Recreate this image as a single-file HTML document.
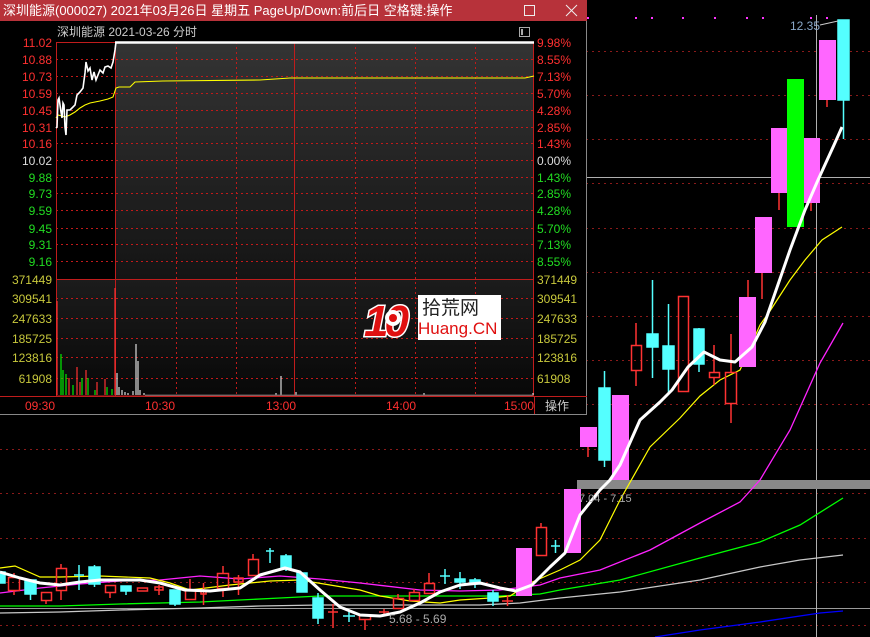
<!DOCTYPE html>
<html><head><meta charset="utf-8"><style>
html,body{margin:0;padding:0;background:#000;width:870px;height:637px;overflow:hidden}
svg{display:block}
text{font-family:"Liberation Sans","Noto Sans CJK SC",sans-serif}
</style></head><body>
<svg width="870" height="637" viewBox="0 0 870 637" xmlns="http://www.w3.org/2000/svg">
<defs>
<linearGradient id="pg" x1="0" y1="0" x2="0" y2="1"><stop offset="0" stop-color="#343434"/><stop offset="1" stop-color="#141414"/></linearGradient>
<linearGradient id="vg" x1="0" y1="0" x2="0" y2="1"><stop offset="0" stop-color="#1c1c1c"/><stop offset="1" stop-color="#080808"/></linearGradient>
</defs>
<rect width="870" height="637" fill="#000"/>
<g stroke="#8a1a1a" stroke-width="1" stroke-dasharray="2,4">
<line x1="586" y1="51.5" x2="870" y2="51.5"/><line x1="586" y1="95.5" x2="870" y2="95.5"/><line x1="586" y1="139.5" x2="870" y2="139.5"/><line x1="586" y1="183.5" x2="870" y2="183.5"/><line x1="586" y1="228.5" x2="870" y2="228.5"/><line x1="586" y1="272.5" x2="870" y2="272.5"/><line x1="586" y1="316.5" x2="870" y2="316.5"/><line x1="586" y1="360.5" x2="870" y2="360.5"/><line x1="586" y1="404.5" x2="870" y2="404.5"/>
<line x1="0" y1="449.5" x2="870" y2="449.5"/><line x1="0" y1="493.5" x2="870" y2="493.5"/><line x1="0" y1="538.5" x2="870" y2="538.5"/><line x1="0" y1="582.5" x2="870" y2="582.5"/><line x1="0" y1="625.5" x2="870" y2="625.5"/>
</g>
<line x1="0" y1="608.5" x2="870" y2="608.5" stroke="#9a9a9a"/>
<line x1="586" y1="177.5" x2="870" y2="177.5" stroke="#b0b0b0"/>
<line x1="816.5" y1="15" x2="816.5" y2="637" stroke="#b0b0b0"/>
<rect x="577" y="480" width="293" height="9" fill="#888"/>
<g fill="#ff33ff"><rect x="587" y="17" width="2" height="2"/><rect x="635" y="17" width="2" height="2"/><rect x="651" y="17" width="2" height="2"/><rect x="682" y="17" width="2" height="2"/><rect x="714" y="17" width="2" height="2"/><rect x="746" y="17" width="2" height="2"/><rect x="762" y="17" width="2" height="2"/><rect x="810" y="17" width="2" height="2"/><rect x="826" y="17" width="2" height="2"/></g>
<polyline fill="none" stroke="#0000ff" stroke-width="1.3" points="655,637 700,630 760,622 820,613 843,611"/>
<polyline fill="none" stroke="#c8c8c8" stroke-width="1.3" points="0,613 60,612 120,610 200,608 260,606 320,605 400,605 480,605 520,603 560,598 620,592 700,580 760,567 800,560 843,555"/>
<polyline fill="none" stroke="#00ff00" stroke-width="1.3" points="0,606 60,606 120,604 200,602 280,598 320,596 400,596 500,596 540,594 560,590 620,580 700,558 760,542 800,525 843,498"/>
<polyline fill="none" stroke="#ff22ff" stroke-width="1.3" points="0,593 40,588 80,584 120,581 160,580 200,576 240,579 280,576 320,579 360,583 420,590 460,591 500,590 540,585 560,578 600,570 650,550 700,523 740,502 760,480 790,430 820,363 843,323"/>
<polyline fill="none" stroke="#ffff00" stroke-width="1.2" points="0,568 15,566 40,577 60,577 100,576 150,578 170,583 190,590 230,585 270,581 300,580 330,585 360,590 380,596 410,601 440,603 460,600 490,598 510,596 530,583 560,570 580,560 600,540 620,500 650,447 680,418 700,396 720,380 740,370 760,325 770,311 790,280 805,260 822,240 842,227"/>
<g stroke="#ff3232" stroke-width="1.5" fill="none">
<rect x="8.5" y="577.5" width="11" height="13"/><line x1="14" y1="573" x2="14" y2="577"/><line x1="14" y1="591" x2="14" y2="595"/>
<rect x="41.5" y="592.5" width="10" height="8"/><line x1="46" y1="600" x2="46" y2="604"/>
<rect x="56.5" y="568.5" width="10" height="22"/><line x1="61" y1="564" x2="61" y2="568"/><line x1="61" y1="591" x2="61" y2="600"/>
<rect x="105.5" y="585.5" width="10" height="7"/><line x1="110" y1="592" x2="110" y2="598"/>
<rect x="137.5" y="588" width="10" height="3"/>
<rect x="155" y="587" width="8" height="3"/><line x1="159" y1="585" x2="159" y2="595"/>
<rect x="185.5" y="590.5" width="10" height="9"/><line x1="190" y1="579" x2="190" y2="590"/>
<rect x="201" y="591" width="5" height="3"/><line x1="203.5" y1="583" x2="203.5" y2="605"/>
<rect x="217.5" y="573.5" width="11" height="15"/><line x1="223" y1="566" x2="223" y2="573"/><line x1="223" y1="589" x2="223" y2="597"/>
<rect x="234" y="578" width="9" height="4"/><line x1="238.5" y1="575" x2="238.5" y2="595"/>
<rect x="248.5" y="559.5" width="10" height="16"/><line x1="253" y1="554" x2="253" y2="559"/>
<line x1="328" y1="612" x2="338" y2="612"/><line x1="333" y1="604" x2="333" y2="628"/>
<rect x="359.5" y="615.5" width="11" height="4"/><line x1="365" y1="619" x2="365" y2="630"/>
<line x1="379" y1="612" x2="389" y2="612"/><line x1="384" y1="609" x2="384" y2="614"/>
<rect x="393.5" y="598.5" width="10" height="10"/><line x1="398" y1="594" x2="398" y2="598"/>
<rect x="409.5" y="592.5" width="10" height="8"/><line x1="414" y1="589" x2="414" y2="592"/>
<rect x="424.5" y="583.5" width="10" height="10"/><line x1="429" y1="573" x2="429" y2="583"/>
<line x1="502" y1="601" x2="513" y2="601"/><line x1="507.5" y1="595" x2="507.5" y2="606"/>
<rect x="536.5" y="527.5" width="10" height="28"/><line x1="541" y1="523" x2="541" y2="527"/>
<rect x="631.5" y="345.5" width="10" height="25"/><line x1="636" y1="323" x2="636" y2="345"/><line x1="636" y1="371" x2="636" y2="386"/>
<rect x="678.5" y="296.5" width="10" height="95"/>
<rect x="709.5" y="372.5" width="10" height="5"/><line x1="714" y1="345" x2="714" y2="372"/><line x1="714" y1="378" x2="714" y2="385"/>
<rect x="725.5" y="372.5" width="11" height="31"/><line x1="731" y1="334" x2="731" y2="372"/><line x1="731" y1="404" x2="731" y2="423"/>
<line x1="588" y1="447" x2="588" y2="457"/>
<line x1="762" y1="273" x2="762" y2="299"/>
<line x1="779" y1="193" x2="779" y2="210"/>
<line x1="827" y1="100" x2="827" y2="107"/>
<line x1="811" y1="203" x2="811" y2="211"/>
<line x1="748" y1="280" x2="748" y2="297"/>
</g>
<g fill="#54ffff" stroke="#54ffff" stroke-width="1.5">
<rect x="0" y="572" width="5" height="11"/>
<rect x="25" y="580" width="11" height="14" /><line x1="30.5" y1="594" x2="30.5" y2="600"/>
<line x1="74" y1="575" x2="84" y2="575"/><line x1="79" y1="565" x2="79" y2="590"/>
<rect x="89" y="567" width="11" height="17"/><line x1="94.5" y1="565" x2="94.5" y2="587"/>
<rect x="121" y="586" width="10" height="5"/><line x1="126" y1="591" x2="126" y2="595"/>
<rect x="170" y="590" width="10" height="14"/><line x1="175" y1="604" x2="175" y2="606"/>
<line x1="266" y1="551" x2="274" y2="551"/><line x1="270" y1="548" x2="270" y2="563"/>
<rect x="281" y="556" width="10" height="13"/><line x1="286" y1="554" x2="286" y2="571"/>
<rect x="297" y="573" width="10" height="19"/>
<rect x="313" y="598" width="10" height="20"/><line x1="318" y1="593" x2="318" y2="624"/>
<line x1="343" y1="616" x2="355" y2="616"/><line x1="349" y1="610" x2="349" y2="622"/>
<line x1="440" y1="576" x2="450" y2="576"/><line x1="445" y1="569" x2="445" y2="584"/>
<rect x="455" y="579" width="10" height="3"/><line x1="460" y1="572" x2="460" y2="589"/>
<rect x="470" y="580" width="10" height="4"/><line x1="475" y1="578" x2="475" y2="588"/>
<rect x="488" y="593" width="10" height="8"/><line x1="493" y1="590" x2="493" y2="606"/>
<line x1="551" y1="546" x2="560" y2="546"/><line x1="555.5" y1="540" x2="555.5" y2="553"/>
<rect x="599" y="388" width="11" height="72"/><line x1="604.5" y1="371" x2="604.5" y2="467"/>
<rect x="647" y="334" width="11" height="13"/><line x1="652.5" y1="280" x2="652.5" y2="378"/>
<rect x="663" y="346" width="11" height="23"/><line x1="668.5" y1="304" x2="668.5" y2="393"/>
<rect x="694" y="329" width="10" height="35"/><line x1="699" y1="328" x2="699" y2="372"/>
<rect x="838" y="20" width="11" height="80"/><line x1="843.5" y1="100" x2="843.5" y2="139"/>
</g>
<g fill="#ff66ff">
<rect x="516" y="548" width="16" height="48"/>
<rect x="564" y="489" width="17" height="64"/>
<rect x="580" y="427" width="17" height="20"/>
<rect x="612" y="395" width="17" height="85"/>
<rect x="739" y="297" width="17" height="70"/>
<rect x="755" y="217" width="17" height="56"/>
<rect x="771" y="128" width="16" height="65"/>
<rect x="804" y="138" width="16" height="65"/>
<rect x="819" y="40" width="17" height="60"/>
</g>
<rect x="787" y="79" width="17" height="148" fill="#00ff00"/>
<polyline fill="none" stroke="#fff" stroke-width="3" stroke-linejoin="round" points="0,572 20,578 40,583 60,585 80,582 100,580 120,580 140,580 160,583 185,590 210,591 240,588 260,575 285,568 300,572 320,590 340,607 360,615 380,616 400,612 420,603 440,592 460,585 480,583 500,588 516,591 532,585 550,567 565,553 580,515 600,490 610,480 620,465 640,420 660,402 672,390 688,367 704,352 720,360 735,362 752,347 765,322 790,250 805,210 818,180 834,145 842,127"/>
<text x="389" y="623" font-size="12" fill="#aaa">5.68 - 5.69</text>
<text x="579" y="502" font-size="11" fill="#aaa">7.04 - 7.15</text>
<text x="790" y="30" font-size="12" fill="#8aa8c8">12.35</text>
<line x1="820" y1="25" x2="838" y2="21" stroke="#ccc"/>

<rect x="0" y="0" width="587" height="415" fill="#000"/>
<rect x="0" y="0" width="587" height="21" fill="#b7323a"/>
<text x="3" y="15" font-size="13" fill="#fff">深圳能源(000027) 2021年03月26日 星期五 PageUp/Down:前后日 空格键:操作</text>
<rect x="524.5" y="5.5" width="10" height="10" fill="none" stroke="#eee"/>
<path d="M566 5 L577 16 M577 5 L566 16" stroke="#eee" stroke-width="1"/>
<line x1="586.5" y1="21" x2="586.5" y2="415" stroke="#888"/>
<line x1="0" y1="414.5" x2="587" y2="414.5" stroke="#888"/>
<text x="57" y="36" font-size="12" fill="#ccc">深圳能源  2021-03-26 分时</text>
<rect x="519.5" y="27.5" width="10" height="9" fill="none" stroke="#aaa"/><rect x="521" y="29" width="2" height="6" fill="#aaa"/>
<rect x="115" y="42" width="419" height="237" fill="url(#pg)"/>
<rect x="56" y="279" width="478" height="117" fill="url(#vg)"/>
<g stroke="#c01a1a" stroke-dasharray="2,3">
<line x1="56" y1="59.5" x2="534" y2="59.5"/><line x1="56" y1="76.5" x2="534" y2="76.5"/><line x1="56" y1="93.5" x2="534" y2="93.5"/><line x1="56" y1="110.5" x2="534" y2="110.5"/><line x1="56" y1="127.5" x2="534" y2="127.5"/><line x1="56" y1="143.5" x2="534" y2="143.5"/><line x1="56" y1="160.5" x2="534" y2="160.5"/><line x1="56" y1="177.5" x2="534" y2="177.5"/><line x1="56" y1="193.5" x2="534" y2="193.5"/><line x1="56" y1="210.5" x2="534" y2="210.5"/><line x1="56" y1="228.5" x2="534" y2="228.5"/><line x1="56" y1="244.5" x2="534" y2="244.5"/><line x1="56" y1="261.5" x2="534" y2="261.5"/>
<line x1="56" y1="298.5" x2="534" y2="298.5"/><line x1="56" y1="318.5" x2="534" y2="318.5"/><line x1="56" y1="338.5" x2="534" y2="338.5"/><line x1="56" y1="357.5" x2="534" y2="357.5"/><line x1="56" y1="378.5" x2="534" y2="378.5"/>
<line x1="176.5" y1="42" x2="176.5" y2="396"/><line x1="236.5" y1="42" x2="236.5" y2="396"/><line x1="355.5" y1="42" x2="355.5" y2="396"/><line x1="415.5" y1="42" x2="415.5" y2="396"/><line x1="475.5" y1="42" x2="475.5" y2="396"/>
</g>
<g stroke="#c01c1c" fill="none">
<rect x="56.5" y="42.5" width="477" height="353.5"/>
<line x1="115.5" y1="42" x2="115.5" y2="396"/><line x1="294.5" y1="42" x2="294.5" y2="396"/>
<line x1="56" y1="279.5" x2="534" y2="279.5"/>
<line x1="0" y1="396.5" x2="587" y2="396.5"/>
<line x1="534.5" y1="396" x2="534.5" y2="414"/>
</g>
<g stroke-width="1.2">
<g stroke="#ff3232"><line x1="57" y1="395" x2="57" y2="301"/><line x1="69" y1="395" x2="69" y2="378"/><line x1="77" y1="395" x2="77" y2="367"/><line x1="80" y1="395" x2="80" y2="382"/><line x1="86" y1="395" x2="86" y2="370"/><line x1="97" y1="395" x2="97" y2="382"/><line x1="105" y1="395" x2="105" y2="379"/><line x1="115" y1="395" x2="115" y2="288"/></g>
<g stroke="#00ee00"><line x1="61" y1="395" x2="61" y2="354"/><line x1="63" y1="395" x2="63" y2="370"/><line x1="66" y1="395" x2="66" y2="374"/><line x1="73" y1="395" x2="73" y2="385"/><line x1="82" y1="395" x2="82" y2="378"/><line x1="88" y1="395" x2="88" y2="378"/><line x1="95" y1="395" x2="95" y2="390"/><line x1="107" y1="395" x2="107" y2="387"/><line x1="112" y1="395" x2="112" y2="389"/></g>
<g stroke="#ddd"><line x1="117" y1="395" x2="117" y2="373"/><line x1="119" y1="395" x2="119" y2="387"/><line x1="122" y1="395" x2="122" y2="390"/><line x1="125" y1="395" x2="125" y2="392"/><line x1="128" y1="395" x2="128" y2="393"/><line x1="133" y1="395" x2="133" y2="391"/><line x1="136" y1="395" x2="136" y2="344"/><line x1="138" y1="395" x2="138" y2="361"/><line x1="140" y1="395" x2="140" y2="390"/><line x1="144" y1="395" x2="144" y2="393"/><line x1="281" y1="395" x2="281" y2="376"/><line x1="276" y1="395" x2="276" y2="393"/><line x1="296" y1="395" x2="296" y2="392"/><line x1="424" y1="395" x2="424" y2="393"/><line x1="533" y1="395" x2="533" y2="393"/></g>
<line x1="145" y1="395.2" x2="533" y2="395.2" stroke="#777"/>
</g>
<polyline fill="none" stroke="#ffff00" stroke-width="1.1" points="56,118 58,115 62,116 65,117 70,115 75,112 80,108 85,105 90,103 100,101 108,99 113,97 116,88 119,87 130,87 135,82 163,81 260,80 290,78 525,78 534,76"/>
<polyline fill="none" stroke="#fff" stroke-width="1.6" points="56,128 57,127 58,100 59,98 61,112 62,118 63,103 64,105 65,127 66,135 67,110 70,110 72,108 75,105 77,95 80,92 83,88 85,73 86,62 88,71 90,68 92,80 94,72 96,80 98,75 100,70 103,73 105,67 108,66 111,68 113,62 115,50 116,42"/>
<line x1="115" y1="42.5" x2="534" y2="42.5" stroke="#fff" stroke-width="2.5"/>
<g font-size="12" text-anchor="end">
<g fill="#ff3030"><text x="52" y="47">11.02</text><text x="52" y="64">10.88</text><text x="52" y="81">10.73</text><text x="52" y="98">10.59</text><text x="52" y="115">10.45</text><text x="52" y="132">10.31</text><text x="52" y="148">10.16</text></g>
<text x="52" y="165" fill="#ddd">10.02</text>
<g fill="#22dd22"><text x="52" y="182">9.88</text><text x="52" y="198">9.73</text><text x="52" y="215">9.59</text><text x="52" y="233">9.45</text><text x="52" y="249">9.31</text><text x="52" y="266">9.16</text></g>
<g fill="#c8c83c"><text x="52" y="284">371449</text><text x="52" y="303">309541</text><text x="52" y="323">247633</text><text x="52" y="343">185725</text><text x="52" y="362">123816</text><text x="52" y="383">61908</text></g>
</g>
<g font-size="12">
<g fill="#ff3030"><text x="537" y="47">9.98%</text><text x="537" y="64">8.55%</text><text x="537" y="81">7.13%</text><text x="537" y="98">5.70%</text><text x="537" y="115">4.28%</text><text x="537" y="132">2.85%</text><text x="537" y="148">1.43%</text></g>
<text x="537" y="165" fill="#ddd">0.00%</text>
<g fill="#22dd22"><text x="537" y="182">1.43%</text><text x="537" y="198">2.85%</text><text x="537" y="215">4.28%</text><text x="537" y="233">5.70%</text><text x="537" y="249">7.13%</text><text x="537" y="266">8.55%</text></g>
<g fill="#c8c83c"><text x="537" y="284">371449</text><text x="537" y="303">309541</text><text x="537" y="323">247633</text><text x="537" y="343">185725</text><text x="537" y="362">123816</text><text x="537" y="383">61908</text></g>
<g fill="#ff3030" text-anchor="middle"><text x="40" y="410">09:30</text><text x="160" y="410">10:30</text><text x="281" y="410">13:00</text><text x="401" y="410">14:00</text><text x="519" y="410">15:00</text></g>
<text x="545" y="410" fill="#ccc">操作</text>
</g>
<rect x="418" y="295" width="83" height="45" fill="#fff"/>
<text x="364" y="336" font-size="44" font-weight="bold" fill="#e01010" stroke="#fff" stroke-width="3" paint-order="stroke" font-style="italic" letter-spacing="-4">10</text>
<circle cx="393" cy="318" r="8" fill="#fff"/><circle cx="393" cy="318" r="4" fill="#e01010"/>
<text x="422" y="314" font-size="19" fill="#222">拾荒网</text>
<text x="418" y="334" font-size="17" fill="#e01010">Huang.CN</text>
</svg>
</body></html>
